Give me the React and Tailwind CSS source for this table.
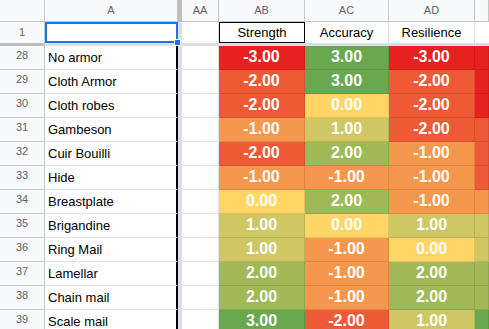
import React from "react";

const scale = {
  "-3": "bg-[#e6211f]",
  "-2": "bg-[#ee5a35]",
  "-1": "bg-[#f5974c]",
  "0": "bg-[#ffd666]",
  "1": "bg-[#cfc763]",
  "2": "bg-[#9eb956]",
  "3": "bg-[#6aa84f]",
};

const rows = [
  [28, "No armor", -3, 3, -3, -3],
  [29, "Cloth Armor", -2, 3, -2, -3],
  [30, "Cloth robes", -2, 0, -2, -3],
  [31, "Gambeson", -1, 1, -2, -2],
  [32, "Cuir Bouilli", -2, 2, -1, -2],
  [33, "Hide", -1, -1, -1, -2],
  [34, "Breastplate", 0, 2, -1, -1],
  [35, "Brigandine", 1, 0, 1, 1],
  [36, "Ring Mail", 1, -1, 0, 1],
  [37, "Lamellar", 2, -1, 2, 2],
  [38, "Chain mail", 2, -1, 2, 2],
  [39, "Scale mail", 3, -2, 1, 3],
];

function ScoreCell({ value, width, hideText }) {
  return (
    <div
      className={`${width} ${scale[String(value)]} h-full shrink-0 flex items-end justify-center pb-[3px] border-r border-b border-black/10 text-white font-bold text-[16px] leading-[18px]`}
    >
      {hideText ? null : value.toFixed(2)}
    </div>
  );
}

function ColHead({ width, label, grow }) {
  return (
    <div
      className={`${width} ${grow ? "flex-1" : "shrink-0"} h-full flex items-center justify-center border-r border-b border-[#c4c7c5] bg-[#f8f9fa] text-[11px] text-[#5f6368]`}
    >
      {label}
    </div>
  );
}

export default function App() {
  return (
    <div
      className="w-[489px] h-[329px] overflow-hidden bg-white text-black"
      style={{ fontFamily: '"Liberation Sans", Arial, sans-serif' }}
    >
      {/* column letters */}
      <div className="flex h-[22px]">
        <div className="w-[45px] shrink-0 h-full bg-[#f8f9fa] border-r border-b border-[#c4c7c5]" />
        <ColHead width="w-[133px]" label="A" />
        <div className="w-[4px] shrink-0 h-full bg-[#bebebe]" />
        <ColHead width="w-[37px]" label="AA" />
        <ColHead width="w-[86px]" label="AB" />
        <ColHead width="w-[84px]" label="AC" />
        <ColHead width="w-[86px]" label="AD" />
        <ColHead width="" label="" grow />
      </div>

      {/* frozen title row */}
      <div className="flex h-[21px] text-[13px]">
        <div className="w-[45px] shrink-0 h-full flex items-center justify-center bg-[#f8f9fa] border-r border-[#c4c7c5] text-[11px] text-[#5f6368]">
          1
        </div>
        <div className="relative w-[133px] shrink-0 h-full border-2 border-[#1a73e8]">
          <div className="absolute right-[-5px] bottom-[-5px] w-[7px] h-[7px] bg-[#1a73e8] border border-white" />
        </div>
        <div className="w-[4px] shrink-0 h-full bg-[#dadee7]" />
        <div className="w-[37px] shrink-0 h-full border-r border-[#e2e2e2]" />
        <div className="w-[86px] shrink-0 h-full flex items-center justify-center border border-black">
          Strength
        </div>
        <div className="w-[84px] shrink-0 h-full flex items-center justify-center border-r border-[#e2e2e2]">
          Accuracy
        </div>
        <div className="w-[86px] shrink-0 h-full flex items-center justify-center border-r border-[#e2e2e2]">
          Resilience
        </div>
        <div className="flex-1" />
      </div>

      {/* freeze divider */}
      <div className="flex h-[3px]">
        <div className="w-[45px] shrink-0 bg-[#bebebe]" />
        <div className="flex-1 bg-[#dadee7]" />
      </div>

      {rows.map(([num, name, str, acc, res, last]) => (
        <div key={num} className="flex h-[24px] text-[13px]">
          <div className="w-[45px] shrink-0 h-full flex items-center justify-center pb-[4px] bg-[#f8f9fa] border-r border-b border-[#c4c7c5] text-[11px] text-[#5f6368]">
            {num}
          </div>
          <div className="w-[133px] shrink-0 h-full flex items-end pl-[3px] pb-[3px] leading-4 border-b border-[#e2e2e2] border-r-2 border-r-black">
            {name}
          </div>
          <div className="w-[4px] shrink-0 h-full bg-[#dadee7]" />
          <div className="w-[37px] shrink-0 h-full border-r border-b border-[#e2e2e2]" />
          <ScoreCell value={str} width="w-[86px]" />
          <ScoreCell value={acc} width="w-[84px]" />
          <ScoreCell value={res} width="w-[86px]" />
          {/* AE runs past the right edge; its centred value sits out of view */}
          <ScoreCell value={last} width="w-[14px]" hideText />
        </div>
      ))}
    </div>
  );
}
